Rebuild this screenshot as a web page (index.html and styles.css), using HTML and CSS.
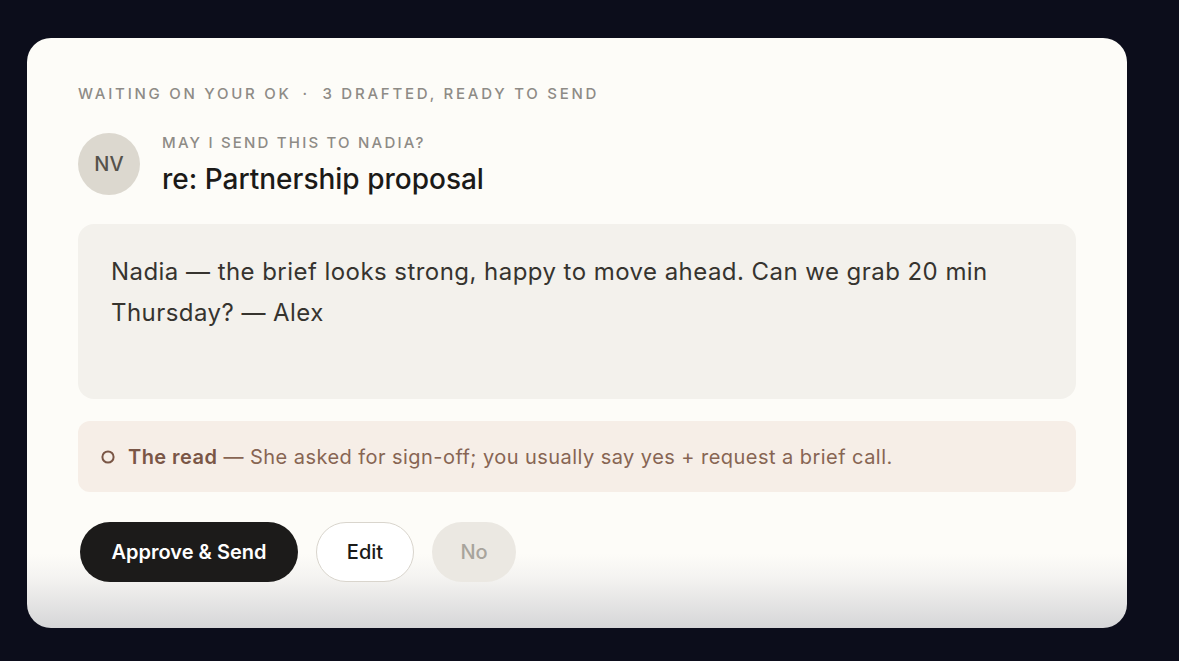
FILE: index.html
```html
<!DOCTYPE html>
<html>
<head>
    <title>Waiting on your OK</title>
    <link rel="stylesheet" href="styles.css">
</head>
<body>
    <div class="card">
        <p class="eyebrow">Waiting on your OK <span class="dot">&middot;</span> 3 drafted, ready to send</p>

        <div class="ask">
            <div class="avatar">NV</div>
            <div class="ask-text">
                <p class="ask-label">May I send this to Nadia?</p>
                <h2 class="subject">re: Partnership proposal</h2>
            </div>
        </div>

        <div class="draft">
            <p>Nadia &mdash; the brief looks strong, happy to move ahead. Can we grab 20 min Thursday? &mdash; Alex</p>
        </div>

        <div class="read">
            <svg class="read-icon" width="14" height="14" viewBox="0 0 14 14">
                <circle cx="7" cy="7" r="5.6" fill="none" stroke="#7a5646" stroke-width="2"/>
            </svg>
            <p><b>The read</b> &mdash; She asked for sign-off; you usually say yes + request a brief call.</p>
        </div>

        <div class="actions">
            <button class="btn btn-approve">Approve &amp; Send</button>
            <button class="btn btn-edit">Edit</button>
            <button class="btn btn-no">No</button>
        </div>
    </div>
</body>
</html>
```

FILE: styles.css
```css
body {
    margin: 0;
    background-color: #0c0d1b;
    font-family: "Inter", "Noto Sans", sans-serif;
    height: 661px;
    overflow: hidden;
}

p, h2 {
    margin: 0;
}

.card {
    width: 1100px;
    box-sizing: border-box;
    margin: 38px 0 0 27px;
    padding: 48px 51px 46px 51px;
    border-radius: 24px;
    background: linear-gradient(to bottom, #fdfcf8 0, #fdfcf8 calc(100% - 74px), #f4f3f1 calc(100% - 50px), #d6d6d8 100%);
}

.eyebrow {
    font-size: 15px;
    line-height: 16px;
    font-weight: 500;
    letter-spacing: 2.75px;
    text-transform: uppercase;
    color: #8e8b86;
}

.eyebrow .dot {
    margin: 0 6px 0 4px;
}

.ask {
    display: flex;
    align-items: center;
    gap: 22px;
    margin-top: 31px;
}

.avatar {
    width: 62px;
    height: 62px;
    border-radius: 50%;
    background-color: #dcd8cf;
    color: #55524b;
    font-size: 20px;
    font-weight: 500;
    display: flex;
    align-items: center;
    justify-content: center;
    flex-shrink: 0;
}

.ask-text {
    padding-top: 2px;
}

.ask-label {
    font-size: 15px;
    line-height: 16px;
    font-weight: 500;
    letter-spacing: 2.2px;
    text-transform: uppercase;
    color: #8e8b86;
}

.subject {
    font-size: 28px;
    line-height: 32px;
    font-weight: 500;
    color: #1b1a18;
    margin-top: 12px;
    letter-spacing: 0;
}

.draft {
    margin-top: 29px;
    min-height: 175px;
    box-sizing: border-box;
    padding: 27px 33px;
    border-radius: 16px;
    background-color: #f3f1ec;
}

.draft p {
    font-size: 24px;
    line-height: 41px;
    color: #36342f;
    letter-spacing: 0.45px;
}

.read {
    margin-top: 22px;
    height: 71px;
    box-sizing: border-box;
    padding: 0 23px;
    border-radius: 12px;
    background-color: #f6eee7;
    display: flex;
    align-items: center;
    gap: 13px;
}

.read p {
    font-size: 20px;
    color: #876553;
    letter-spacing: 0.45px;
}

.read b {
    font-weight: 600;
    color: #7a5646;
}

.actions {
    display: flex;
    gap: 18px;
    margin-top: 30px;
    padding-left: 2px;
}

.btn {
    height: 60px;
    border-radius: 30px;
    font-family: inherit;
    font-size: 20px;
    padding: 0;
    border: 1px solid transparent;
    white-space: nowrap;
    cursor: pointer;
}

.btn-approve {
    width: 218px;
    background-color: #1c1b1a;
    color: #ffffff;
    font-weight: 600;
}

.btn-edit {
    width: 98px;
    background-color: #ffffff;
    border-color: #d9d5cd;
    color: #1b1a18;
    font-weight: 500;
}

.btn-no {
    width: 84px;
    background-color: #ebe8e2;
    color: #a8a49c;
    font-weight: 500;
}
```
